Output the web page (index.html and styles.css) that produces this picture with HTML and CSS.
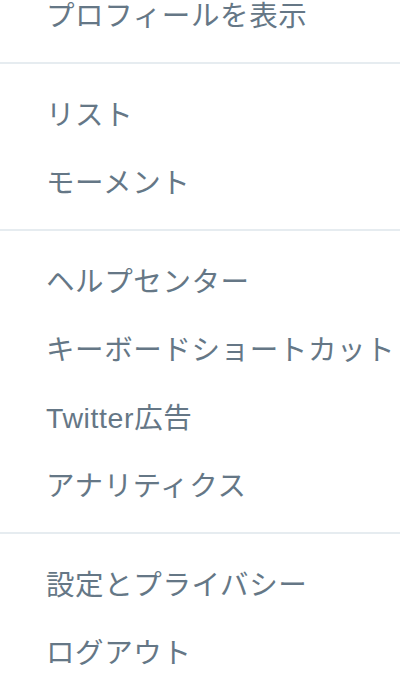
FILE: index.html
```html
<!DOCTYPE html>
<html lang="ja">
<head>
<meta charset="utf-8">
<title>メニュー</title>
<link rel="stylesheet" href="styles.css">
</head>
<body>
<ul class="menu">
  <li class="item">プロフィールを表示</li>
  <li class="divider"></li>
  <li class="item">リスト</li>
  <li class="item">モーメント</li>
  <li class="divider"></li>
  <li class="item">ヘルプセンター</li>
  <li class="item">キーボードショートカット</li>
  <li class="item">Twitter広告</li>
  <li class="item">アナリティクス</li>
  <li class="divider"></li>
  <li class="item">設定とプライバシー</li>
  <li class="item">ログアウト</li>
</ul>
</body>
</html>
```
FILE: styles.css
```css
html, body {
  margin: 0;
  padding: 0;
  background: #ffffff;
  overflow: hidden;
}

.menu {
  list-style: none;
  margin: -20.5px 0 0 0;
  padding: 0;
  font-family: "Liberation Sans", "Noto Sans CJK JP", sans-serif;
  font-size: 28.5px;
  letter-spacing: 0.6px;
  color: #657786;
}

.item {
  height: 68px;
  display: flex;
  align-items: center;
  padding-left: 46px;
  white-space: nowrap;
}

.divider {
  height: 2px;
  background: #e6ecf0;
  margin: 14.5px 0;
}
```
